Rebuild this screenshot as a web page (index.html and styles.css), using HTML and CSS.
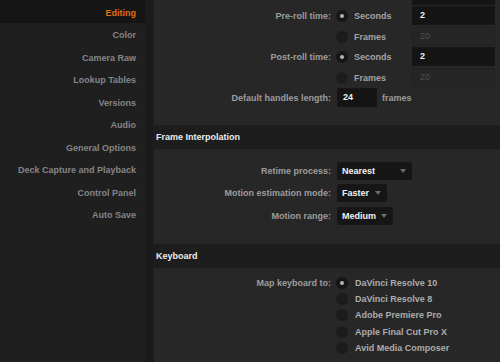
FILE: index.html
```html
<!DOCTYPE html>
<html lang="en">
<head>
    <meta charset="UTF-8">
    <title>Preferences</title>
    <link rel="stylesheet" href="styles.css">
</head>
<body>
    <div class="sidebar">
        <div class="nav-item active">Editing</div>
        <div class="nav-item">Color</div>
        <div class="nav-item">Camera Raw</div>
        <div class="nav-item">Lookup Tables</div>
        <div class="nav-item">Versions</div>
        <div class="nav-item">Audio</div>
        <div class="nav-item">General Options</div>
        <div class="nav-item">Deck Capture and Playback</div>
        <div class="nav-item">Control Panel</div>
        <div class="nav-item">Auto Save</div>
    </div>

    <div class="main">
        <div class="panel panel-timing">
            <div class="row row-prev">
                <div class="label"></div>
                <div class="field"></div>
            </div>
            <div class="row">
                <div class="label">Pre-roll time:</div>
                <span class="radio on"></span>
                <span class="opt">Seconds</span>
                <div class="field">2</div>
            </div>
            <div class="row">
                <div class="label"></div>
                <span class="radio"></span>
                <span class="opt">Frames</span>
                <div class="field off">20</div>
            </div>
            <div class="row">
                <div class="label">Post-roll time:</div>
                <span class="radio on"></span>
                <span class="opt">Seconds</span>
                <div class="field">2</div>
            </div>
            <div class="row">
                <div class="label"></div>
                <span class="radio"></span>
                <span class="opt">Frames</span>
                <div class="field off">20</div>
            </div>
            <div class="row">
                <div class="label">Default handles length:</div>
                <div class="field small">24</div>
                <span class="unit">frames</span>
            </div>
        </div>

        <div class="section-head">Frame Interpolation</div>
        <div class="panel panel-interp">
            <div class="row tall">
                <div class="label">Retime process:</div>
                <div class="select w-nearest">Nearest <span class="arrow"></span></div>
            </div>
            <div class="row tall">
                <div class="label">Motion estimation mode:</div>
                <div class="select w-faster">Faster <span class="arrow"></span></div>
            </div>
            <div class="row tall">
                <div class="label">Motion range:</div>
                <div class="select w-medium">Medium <span class="arrow"></span></div>
            </div>
        </div>

        <div class="section-head">Keyboard</div>
        <div class="panel panel-keys">
            <div class="row key">
                <div class="label">Map keyboard to:</div>
                <span class="radio on"></span>
                <span class="opt">DaVinci Resolve 10</span>
            </div>
            <div class="row key">
                <div class="label"></div>
                <span class="radio"></span>
                <span class="opt">DaVinci Resolve 8</span>
            </div>
            <div class="row key">
                <div class="label"></div>
                <span class="radio"></span>
                <span class="opt">Adobe Premiere Pro</span>
            </div>
            <div class="row key">
                <div class="label"></div>
                <span class="radio"></span>
                <span class="opt">Apple Final Cut Pro X</span>
            </div>
            <div class="row key">
                <div class="label"></div>
                <span class="radio"></span>
                <span class="opt">Avid Media Composer</span>
            </div>
        </div>
    </div>
</body>
</html>
```

FILE: styles.css
```css
body {
    margin: 0;
    height: 362px;
    overflow: hidden;
    display: flex;
    background-color: #1b1b1b;
    font-family: "Liberation Sans", Arial, sans-serif;
    font-size: 9px;
    font-weight: bold;
}
.sidebar {
    width: 145px;
    background-color: #1f1f1f;
    display: flex;
    flex-direction: column;
}
.nav-item {
    height: 22.5px;
    line-height: 23px;
    padding-top: 1.5px;
    box-sizing: border-box;
    text-align: right;
    padding-right: 9px;
    color: #858585;
}
.nav-item.active {
    background-color: #151515;
    color: #e36f16;
}
.main {
    flex: 1;
    margin-left: 8px;
    display: flex;
    flex-direction: column;
}
.panel {
    background-color: #272727;
    border-left: 1px solid #1f1f1f;
    display: flex;
    flex-direction: column;
}
.panel-timing {
    margin-top: -13px;
    padding-bottom: 18px;
    gap: 3.5px;
}
.panel-interp {
    padding-top: 13px;
    padding-bottom: 19px;
    gap: 4.5px;
}
.panel-keys {
    padding-top: 7px;
    flex: 1;
}
.section-head {
    height: 24px;
    line-height: 24px;
    padding-left: 3px;
    background-color: #1d1d1d;
    color: #ececec;
}
.row {
    display: flex;
    align-items: center;
    height: 17px;
}
.row.tall {
    height: 18px;
}
.row.key {
    height: 16.3px;
}
.label {
    width: 177px;
    padding-right: 5px;
    text-align: right;
    color: #9d9d9d;
    flex-shrink: 0;
}
.radio {
    width: 12px;
    height: 12px;
    border-radius: 50%;
    background-color: #1c1c1c;
    display: flex;
    align-items: center;
    justify-content: center;
    flex-shrink: 0;
}
.radio.on {
    background-color: #161616;
}
.radio.on::after {
    content: "";
    width: 4px;
    height: 4px;
    border-radius: 50%;
    background-color: #b4b4b4;
}
.opt {
    margin-left: 6px;
    width: 58px;
    color: #a3a3a3;
    white-space: nowrap;
}
.key .opt {
    margin-left: 7px;
    color: #acacac;
}
.field {
    width: 74px;
    height: 17px;
    line-height: 17px;
    padding-left: 7px;
    background-color: #141414;
    border: 1px solid #161616;
    box-sizing: content-box;
    color: #f2f2f2;
    margin-top: -1px;
}
.field.off {
    background-color: #252525;
    border-color: #212121;
    color: #4f4f4f;
    font-weight: normal;
}
.field.small {
    width: 33px;
    padding-left: 5px;
    margin-left: 1px;
}
.row-prev .field {
    margin-left: 76px;
}
.unit {
    margin-left: 5px;
    color: #9d9d9d;
}
.select {
    height: 18px;
    line-height: 18px;
    margin-left: 1px;
    padding-left: 5px;
    box-sizing: border-box;
    background-color: #161616;
    border-radius: 2px;
    color: #f2f2f2;
    display: flex;
    align-items: center;
    justify-content: space-between;
    padding-right: 6px;
}
.w-nearest { width: 75px; }
.w-faster { width: 50px; }
.w-medium { width: 56px; }
.arrow {
    width: 0;
    height: 0;
    border-left: 3px solid transparent;
    border-right: 3px solid transparent;
    border-top: 4px solid #6c6c6c;
}
```
